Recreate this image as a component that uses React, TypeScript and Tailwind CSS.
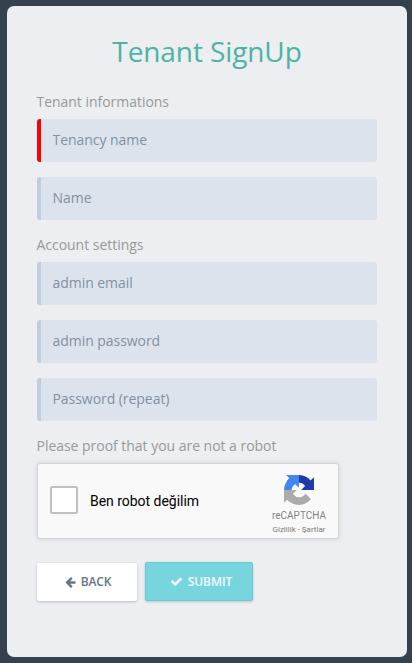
import React from "react";

function Field({ placeholder, required = false, type = "text" }: { placeholder: string; required?: boolean; type?: string }) {
  return (
    <input
      type={type}
      placeholder={placeholder}
      className={`block h-[43px] w-full rounded-[3px] border-l-4 bg-[#dde3ec] pb-0.5 pl-[11.5px] text-sm tracking-[-0.05px] text-[#8290a3] outline-none placeholder:text-[#8290a3] ${
        required ? "border-[#ff0000]" : "border-[#c3ccda]"
      }`}
    />
  );
}

function Label({ children }: { children: React.ReactNode }) {
  return <p className="-ml-[0.5px] h-[17px] text-sm leading-[17px] tracking-[-0.03px] text-[#999]">{children}</p>;
}

function RecaptchaLogo() {
  return (
    <svg viewBox="0 0 64 64" className="h-[30px] w-[30px]">
      <path fill="#1c3aa9" d="M64 31.955l-.033-1.37V4.687l-7.16 7.16C50.948 4.674 42.033.093 32.05.093c-10.4 0-19.622 4.96-25.458 12.64l11.736 11.86a15.55 15.55 0 0 1 4.754-5.334c2.05-1.6 4.952-2.906 8.968-2.906.485 0 .86.057 1.135.163 4.976.393 9.288 3.14 11.828 7.124l-8.307 8.307L64 31.953" />
      <path fill="#4285f4" d="M31.862.094l-1.37.033H4.594l7.16 7.16C4.58 13.147 0 22.06 0 32.046c0 10.4 4.96 19.622 12.64 25.458L24.5 45.768a15.55 15.55 0 0 1-5.334-4.754c-1.6-2.05-2.906-4.952-2.906-8.968 0-.485.057-.86.163-1.135.393-4.976 3.14-9.288 7.124-11.828l8.307 8.307L31.86.095" />
      <path fill="#ababab" d="M.001 32.045l.033 1.37v25.898l7.16-7.16c5.86 7.173 14.774 11.754 24.76 11.754 10.4 0 19.622-4.96 25.458-12.64l-11.736-11.86a15.55 15.55 0 0 1-4.754 5.334c-2.05 1.6-4.952 2.906-8.968 2.906-.485 0-.86-.057-1.135-.163-4.976-.393-9.288-3.14-11.828-7.124l8.307-8.307c-10.522.04-22.4.066-27.295-.005" />
    </svg>
  );
}

function ArrowLeftIcon() {
  return (
    <svg viewBox="0 0 1536 1792" fill="currentColor" className="h-3 w-[11px]">
      <path d="M1536 896v128q0 53-32.5 90.5t-84.5 37.5h-704l293 294q38 36 38 90t-38 90l-75 76q-37 37-90 37-52 0-91-37l-651-652q-37-37-37-90 0-52 37-91l651-650q38-38 91-38 52 0 90 38l75 74q38 38 38 91t-38 91l-293 293h704q52 0 84.5 37.5t32.5 90.5z" />
    </svg>
  );
}

function CheckIcon() {
  return (
    <svg viewBox="0 0 1792 1792" fill="currentColor" className="h-[13px] w-[13px]">
      <path d="M1671 566q0 40-28 68l-724 724-136 136q-28 28-68 28t-68-28l-136-136-362-362q-28-28-28-68t28-68l136-136q28-28 68-28t68 28l294 295 656-657q28-28 68-28t68 28l136 136q28 28 28 68z" />
    </svg>
  );
}

export default function App() {
  return (
    <div className="h-[663px] w-[412px] bg-[#364150] pt-1.5 pl-[7px] font-['Open_Sans',sans-serif]">
      <form className="h-[651px] w-[400px] rounded-[7px] bg-[#eceef1] px-[30px] pt-[27px]">
        <h1 className="h-[36px] text-center text-[28px] leading-[36px] tracking-[-0.1px] text-[#4db3a4]">Tenant SignUp</h1>

        <div className="mt-6">
          <Label>Tenant informations</Label>
          <div className="mt-[9px] flex flex-col gap-[15px]">
            <Field placeholder="Tenancy name" required />
            <Field placeholder="Name" />
          </div>
        </div>

        <div className="mt-4">
          <Label>Account settings</Label>
          <div className="mt-[9px] flex flex-col gap-[15px]">
            <Field placeholder="admin email" />
            <Field placeholder="admin password" />
            <Field placeholder="Password (repeat)" />
          </div>
        </div>

        <div className="mt-4">
          <Label>Please proof that you are not a robot</Label>
          <div className="mt-[9px] flex h-[76px] w-[302px] rounded-[3px] border border-[#d3d3d3] bg-[#f9f9f9] font-[Roboto,sans-serif] shadow-[0_0_4px_1px_rgba(0,0,0,0.08)]">
            <div className="flex flex-1 items-start pt-[22px] pl-3">
              <div className="h-7 w-7 rounded-xs border-2 border-[#c1c1c1] bg-white" />
              <span className="mt-[7px] ml-3 text-sm leading-[17px] tracking-[-0.03px] text-black">Ben robot değilim</span>
            </div>
            <div className="mr-2 flex w-[62px] flex-col items-center pt-[11px] whitespace-nowrap">
              <RecaptchaLogo />
              <span className="mt-[5px] text-[10px] leading-[12px] text-[#555]/75">reCAPTCHA</span>
              <span className="mt-[3px] text-[8px] leading-[10px] text-[#555]/80">Gizlilik - Şartlar</span>
            </div>
          </div>
        </div>

        <div className="mt-[23px] flex items-center gap-2 text-xs font-semibold">
          <button type="button" className="flex h-[38px] w-[100px] items-center justify-center gap-[5px] rounded-xs bg-white pl-0.5 tracking-[-0.1px] text-[#64748a] shadow-[0_1px_3px_rgba(0,0,0,0.22)]">
            <ArrowLeftIcon />
            BACK
          </button>
          <button type="submit" className="flex h-[39px] w-[108px] items-center justify-center gap-[5px] rounded-xs border border-[#6bc8d1] bg-[#77d5de] pl-1 tracking-[-0.05px] text-[#f3fbfc] shadow-[0_1px_3px_rgba(0,0,0,0.18)]">
            <CheckIcon />
            SUBMIT
          </button>
        </div>
      </form>
    </div>
  );
}
